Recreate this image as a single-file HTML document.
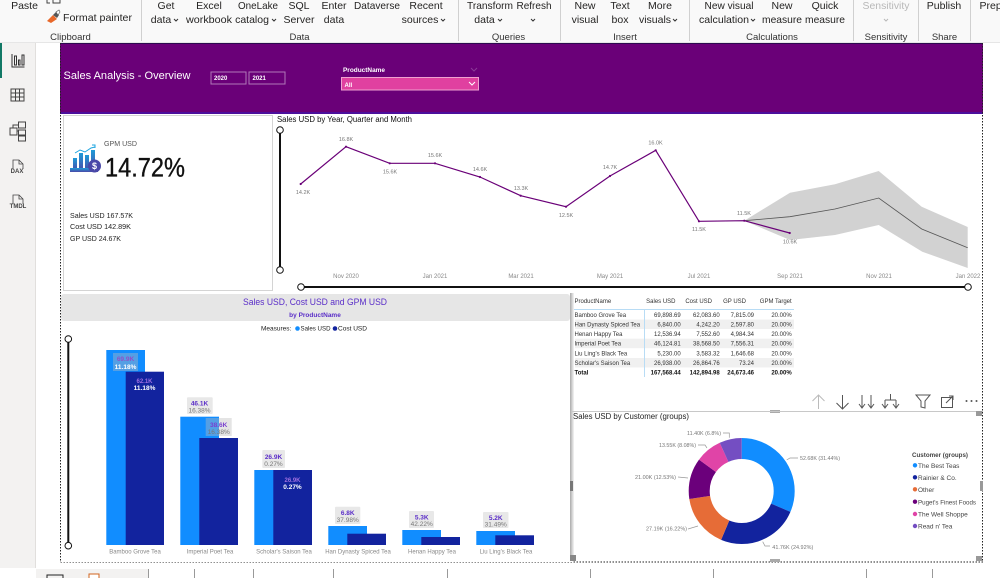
<!DOCTYPE html>
<html><head><meta charset="utf-8"><title>Sales Analysis</title>
<style>
html,body{margin:0;padding:0;width:1000px;height:578px;overflow:hidden;background:#fff}
svg{display:block;filter:blur(.3px)}
text{font-family:"Liberation Sans",sans-serif}
.r{font-size:10.5px;fill:#252423;text-anchor:middle}
.g{font-size:9.5px;fill:#333;text-anchor:middle}
.ch{fill:none;stroke:#333;stroke-width:1}
.x{font-size:6px;fill:#888;text-anchor:middle}
.d{font-size:5.5px;fill:#777;text-anchor:middle}
.t{font-size:6px;fill:#333}
.e{text-anchor:end}
.b{font-weight:bold;fill:#111}
.p{font-size:6.5px;font-weight:bold;fill:#5a2dc8;text-anchor:middle}
.q{font-size:6.5px;fill:#777;text-anchor:middle}
.w{font-size:6.5px;font-weight:bold;fill:#fff;text-anchor:middle}
.l{font-size:6px;fill:#a070e0;font-weight:bold;text-anchor:middle}
.bx{font-size:6px;fill:#888;text-anchor:middle}
.dl{font-size:5.8px;fill:#777}
.lg{font-size:6.5px;fill:#444}
.ic{fill:none;stroke:#444;stroke-width:1}
.li{fill:none;stroke:#999;stroke-width:.7}
</style></head><body>
<svg width="1000" height="578" viewBox="0 0 1000 578" xmlns="http://www.w3.org/2000/svg">
<rect width="1000" height="578" fill="#fff"/>

<!-- ribbon -->
<rect width="1000" height="42" fill="#f9f9f9"/>
<rect y="42" width="1000" height="1" fill="#e6e6e6"/>
<g stroke="#d0d0d0"><path d="M141.500 0V41M458.500 0V41M560.500 0V41M689.500 0V41M853.500 0V41M918.500 0V41M970.500 0V41"/></g>
<text class="r" x="24.500" y="9">Paste</text>
<path d="M47 0v3h3M53 0v3h7V0" fill="none" stroke="#444"/>
<path d="M47 21l6-6 4 4-6 4z" fill="#e8682a"/><path d="M53 15l3-3 3 3-2 3z" fill="#555"/><path d="M56 12l3-2 1 2-2 3z" fill="#fff" stroke="#555" stroke-width=".6"/>
<text class="r" x="97.500" y="21" textLength="69" lengthAdjust="spacingAndGlyphs">Format painter</text>
<text class="r" x="166" y="9">Get</text><text class="r" x="161" y="23">data</text>
<text class="r" x="209" y="9">Excel</text><text class="r" x="209" y="23" textLength="46" lengthAdjust="spacingAndGlyphs">workbook</text>
<text class="r" x="258" y="9" textLength="40" lengthAdjust="spacingAndGlyphs">OneLake</text><text class="r" x="252" y="23">catalog</text>
<text class="r" x="299" y="9">SQL</text><text class="r" x="299" y="23">Server</text>
<text class="r" x="334" y="9">Enter</text><text class="r" x="334" y="23">data</text>
<text class="r" x="377" y="9" textLength="46" lengthAdjust="spacingAndGlyphs">Dataverse</text>
<text class="r" x="426" y="9">Recent</text><text class="r" x="420" y="23">sources</text>
<text class="r" x="490" y="9" textLength="46" lengthAdjust="spacingAndGlyphs">Transform</text><text class="r" x="484.500" y="23">data</text>
<text class="r" x="534" y="9" textLength="35" lengthAdjust="spacingAndGlyphs">Refresh</text>
<text class="r" x="585" y="9">New</text><text class="r" x="585" y="23">visual</text>
<text class="r" x="620" y="9">Text</text><text class="r" x="620" y="23">box</text>
<text class="r" x="660" y="9">More</text><text class="r" x="655" y="23">visuals</text>
<text class="r" x="729" y="9" textLength="49" lengthAdjust="spacingAndGlyphs">New visual</text><text class="r" x="724" y="23" textLength="50" lengthAdjust="spacingAndGlyphs">calculation</text>
<text class="r" x="782" y="9">New</text><text class="r" x="782" y="23" textLength="40" lengthAdjust="spacingAndGlyphs">measure</text>
<text class="r" x="825" y="9">Quick</text><text class="r" x="825" y="23" textLength="40" lengthAdjust="spacingAndGlyphs">measure</text>
<text class="r" x="886" y="9" style="fill:#b8b8b8" textLength="47" lengthAdjust="spacingAndGlyphs">Sensitivity</text>
<text class="r" x="944" y="9">Publish</text>
<text class="r" x="979.500" y="9" style="text-anchor:start">Prep</text>
<g class="ch">
<path d="M174 19l2 2 2-2M272 19l2 2 2-2M441 19l2 2 2-2M498 19l2 2 2-2M531 19l2 2 2-2M673 19l2 2 2-2M751 19l2 2 2-2"/>
<path d="M884 19l2 2 2-2" stroke="#b8b8b8"/>
</g>
<text class="g" x="70.500" y="40">Clipboard</text>
<text class="g" x="299.500" y="40">Data</text>
<text class="g" x="508.500" y="40">Queries</text>
<text class="g" x="625" y="40">Insert</text>
<text class="g" x="772" y="40">Calculations</text>
<text class="g" x="886" y="40">Sensitivity</text>
<text class="g" x="944.500" y="40">Share</text>

<!-- left rail -->
<rect x="0" y="43" width="35" height="525" fill="#f3f2f1"/>
<rect x="35" y="43" width="1" height="525" fill="#e1dfdd"/>
<rect x="0" y="43" width="2" height="35" fill="#117865"/>
<g class="ic">
<path d="M12 54v13h12.500M14.500 56v9h2v-9zM18.500 60v5h1.500v-5zM22 55v10h2v-10z" stroke="#333"/>
<rect x="11" y="89" width="13" height="12"/><path d="M11 93h13M11 97h13M15.500 89v12M19.500 89v12"/>
<rect x="10" y="128" width="7" height="7"/><rect x="18.500" y="122" width="7" height="6"/><rect x="18.500" y="130" width="7" height="5"/><rect x="18.500" y="136" width="7" height="5"/><path d="M17 131h1.500M13 128v-3h5.500"/>
<path d="M13 169v-9h6l4 4v5M19 160v4h4" stroke-width=".8"/>
<path d="M13 204v-9h6l4 4v5M19 195v4h4" stroke-width=".8"/>
</g>
<text x="17" y="173" font-size="6" text-anchor="middle" fill="#444" font-weight="bold">DAX</text>
<text x="18" y="208" font-size="6" text-anchor="middle" fill="#444" font-weight="bold">TMDL</text>

<!-- banner -->
<rect x="60" y="43" width="923" height="70" fill="#6a0078"/>
<rect x="60" y="43" width="923" height="1" fill="#2d0a50"/>
<rect x="60" y="112" width="923" height="2" fill="#4b0f9c"/>
<text x="63.500" y="79" font-size="11" fill="#fff" textLength="127" lengthAdjust="spacingAndGlyphs">Sales Analysis - Overview</text>
<rect x="211" y="72" width="35" height="12" fill="none" stroke="#b078b8"/>
<rect x="249" y="72" width="36" height="12" fill="none" stroke="#b078b8"/>
<text x="214" y="80" font-size="6" font-weight="bold" fill="#fff">2020</text>
<text x="252.500" y="80" font-size="6" font-weight="bold" fill="#fff">2021</text>
<text x="343" y="72" font-size="6.500" font-weight="bold" fill="#fff" textLength="42" lengthAdjust="spacingAndGlyphs">ProductName</text>
<path d="M471 68l3 3 3-3" fill="none" stroke="#8a3a96"/>
<rect x="341.500" y="77.500" width="137" height="12.500" fill="#e040a0" stroke="#f0a0d0"/>
<text x="344.500" y="87" font-size="6" font-weight="bold" fill="#fff">All</text>
<path d="M469 82l3 3 3-3" fill="none" stroke="#fff"/>

<!-- dotted selection -->
<path d="M60.500 43V562H983M982.500 43V562" fill="none" stroke="#222" stroke-dasharray="1.500 1.500"/>

<!-- KPI -->
<rect x="63.500" y="115.500" width="209" height="175" fill="#fff" stroke="#d4d4d4"/>
<defs><linearGradient id="ig" x1="0" y1="0" x2="0" y2="1"><stop offset="0" stop-color="#1e9bd8"/><stop offset="1" stop-color="#4a4aa8"/></linearGradient></defs>
<g fill="url(#ig)">
<rect x="73" y="158" width="4" height="13"/><rect x="79" y="153" width="4" height="18"/><rect x="85" y="155" width="4" height="16"/><rect x="91" y="150" width="4" height="21"/>
<rect x="70" y="168" width="28" height="4"/>
</g>
<circle cx="94.500" cy="166" r="6.500" fill="#4a48a8"/>
<text x="94.500" y="169" font-size="9" font-weight="bold" fill="#fff" text-anchor="middle">$</text>
<path d="M75 153l5-3 5 2 6-4 4-1M92 145h3v3" fill="none" stroke="#1ea5e0"/>
<text x="104" y="146" font-size="7.500" fill="#555" textLength="33" lengthAdjust="spacingAndGlyphs">GPM USD</text>
<text x="105" y="176.500" font-size="27" fill="#111" stroke="#111" stroke-width=".35" textLength="80" lengthAdjust="spacingAndGlyphs">14.72%</text>
<text x="70" y="218" font-size="7.500" fill="#222" textLength="63" lengthAdjust="spacingAndGlyphs">Sales USD 167.57K</text>
<text x="70" y="229" font-size="7.500" fill="#222" textLength="61" lengthAdjust="spacingAndGlyphs">Cost USD 142.89K</text>
<text x="70" y="241" font-size="7.500" fill="#222" textLength="51" lengthAdjust="spacingAndGlyphs">GP USD 24.67K</text>

<!-- line chart -->
<text x="277" y="122" font-size="8" fill="#111" textLength="135" lengthAdjust="spacingAndGlyphs">Sales USD by Year, Quarter and Month</text>
<path d="M280 130V270M301 287H968" stroke="#111" stroke-width="2"/>
<g fill="#fff" stroke="#111"><circle cx="280" cy="130" r="3.300"/><circle cx="280" cy="270" r="3.300"/><circle cx="301" cy="287" r="3.300"/><circle cx="968" cy="287" r="3.300"/></g>
<path d="M744.300 220.700L790 192.700 835 184.300 878.700 171 921.700 206.700 967.700 227 967.700 268 922.300 251.700 878.700 225 835 235 790 240 744.300 220.700Z" fill="#d2d2d2"/>
<path d="M744.300 220.700L790 216.700 835 209 878.700 198 921.700 229 967.700 247.700" fill="none" stroke="#555" stroke-width=".8"/>
<path d="M300.700 184L346 146.700 389.700 163.300 435 163.300 480 177 520.700 195.700 566 206.700 610 176 655.700 150.300 699 221.300 744.300 220.700 789.700 233" fill="none" stroke="#6a0078" stroke-width="1.200"/>
<g fill="#6a0078"><circle cx="300.700" cy="184" r="1.100"/><circle cx="346" cy="146.700" r="1.100"/><circle cx="389.700" cy="163.300" r="1.100"/><circle cx="435" cy="163.300" r="1.100"/><circle cx="480" cy="177" r="1.100"/><circle cx="520.700" cy="195.700" r="1.100"/><circle cx="566" cy="206.700" r="1.100"/><circle cx="610" cy="176" r="1.100"/><circle cx="655.700" cy="150.300" r="1.100"/><circle cx="699" cy="221.300" r="1.100"/><circle cx="744.300" cy="220.700" r="1.100"/><circle cx="789.700" cy="233" r="1.100"/></g>
<text class="d" x="303" y="194">14.2K</text><text class="d" x="346" y="141">16.8K</text><text class="d" x="390" y="173.500">15.6K</text><text class="d" x="435" y="157">15.6K</text><text class="d" x="480" y="171">14.6K</text><text class="d" x="521" y="190">13.3K</text><text class="d" x="566" y="217">12.5K</text><text class="d" x="610" y="169">14.7K</text><text class="d" x="655.500" y="144.500">16.0K</text><text class="d" x="699" y="231">11.5K</text><text class="d" x="744" y="215">11.5K</text><text class="d" x="790" y="243.500">10.6K</text>
<text class="x" x="346" y="278">Nov 2020</text><text class="x" x="435" y="278">Jan 2021</text><text class="x" x="521" y="278">Mar 2021</text><text class="x" x="610" y="278">May 2021</text><text class="x" x="699" y="278">Jul 2021</text><text class="x" x="790" y="278">Sep 2021</text><text class="x" x="879" y="278">Nov 2021</text><text class="x" x="968" y="278">Jan 2022</text>

<!-- bar chart -->
<rect x="61" y="293" width="511" height="269" fill="#fff"/>
<rect x="61" y="294" width="509" height="27" rx="3" fill="#e6e6e6"/>
<text x="315" y="305" font-size="9" fill="#5a2dc8" text-anchor="middle" textLength="144" lengthAdjust="spacingAndGlyphs">Sales USD, Cost USD and GPM USD</text>
<text x="315" y="317" font-size="6.500" font-weight="bold" fill="#5a2dc8" text-anchor="middle">by ProductName</text>
<text x="261" y="330.500" font-size="6.500" fill="#222">Measures:</text>
<circle cx="297.500" cy="328.500" r="2.300" fill="#118dff"/><text x="300.500" y="330.500" font-size="6.500" fill="#222" textLength="30" lengthAdjust="spacingAndGlyphs">Sales USD</text>
<circle cx="335" cy="328.500" r="2.300" fill="#12239e"/><text x="338" y="330.500" font-size="6.500" fill="#222" textLength="29" lengthAdjust="spacingAndGlyphs">Cost USD</text>
<path d="M68.300 339V545.700" stroke="#111" stroke-width="2"/>
<g fill="#fff" stroke="#111"><circle cx="68.300" cy="339" r="3.300"/><circle cx="68.300" cy="545.700" r="3.300"/></g>
<g fill="#118dff">
<rect x="106.300" y="350" width="38.700" height="195"/><rect x="180.300" y="416.700" width="38.700" height="128.300"/><rect x="254.300" y="470" width="38.700" height="75"/><rect x="328.300" y="526" width="38.700" height="19"/><rect x="402.300" y="530" width="38.700" height="15"/><rect x="476.300" y="531" width="38.700" height="14"/>
</g>
<g fill="#12239e">
<rect x="125.700" y="371.700" width="38.300" height="173.300"/><rect x="199.300" y="438" width="38.700" height="107"/><rect x="273.300" y="470" width="38.700" height="75"/><rect x="347.300" y="533.700" width="38.700" height="11.300"/><rect x="421.300" y="537" width="38.700" height="8"/><rect x="495.300" y="535.300" width="38.700" height="9.700"/>
</g>
<g fill="#bbb" fill-opacity=".4">
<rect x="113" y="353" width="25" height="18"/><rect x="205.700" y="418" width="26" height="18"/>
</g>
<g fill="#e8e8e8">
<rect x="187" y="397.300" width="25.700" height="16.700" rx="1"/><rect x="262.300" y="450" width="22.700" height="18" rx="1"/><rect x="335" y="506.700" width="25.300" height="17.300" rx="1"/><rect x="409" y="511" width="25" height="17" rx="1"/><rect x="483" y="512" width="25.500" height="16" rx="1"/>
</g>
<text class="p" x="125.500" y="361" style="fill:#9050c8">69.9K</text><text class="w" x="125.500" y="369">11.18%</text>
<text class="l" x="144.500" y="383">62.1K</text><text class="w" x="144.500" y="390">11.18%</text>
<text class="p" x="199.500" y="405.500">46.1K</text><text class="q" x="199.500" y="412.500">16.38%</text>
<text class="p" x="218.700" y="427" style="fill:#7a40d0">38.6K</text><text class="q" x="218.700" y="434">16.38%</text>
<text class="p" x="273.500" y="459">26.9K</text><text class="q" x="273.500" y="466">0.27%</text>
<text class="l" x="292.500" y="482">26.9K</text><text class="w" x="292.500" y="489">0.27%</text>
<text class="p" x="347.700" y="515">6.8K</text><text class="q" x="347.700" y="522">37.98%</text>
<text class="p" x="421.700" y="519.500">5.3K</text><text class="q" x="421.700" y="526">42.22%</text>
<text class="p" x="495.700" y="520">5.2K</text><text class="q" x="495.700" y="526.500">31.49%</text>
<text class="bx" x="135" y="553.500">Bamboo Grove Tea</text><text class="bx" x="210" y="553.500">Imperial Poet Tea</text><text class="bx" x="284" y="553.500">Scholar's Saison Tea</text><text class="bx" x="358" y="553.500">Han Dynasty Spiced Tea</text><text class="bx" x="432" y="553.500">Henan Happy Tea</text><text class="bx" x="506" y="553.500">Liu Ling's Black Tea</text>

<!-- panel edge -->
<defs><linearGradient id="sh" x1="0" x2="1" y1="0" y2="0"><stop offset="0" stop-color="#aaa"/><stop offset="1" stop-color="#f6f6f6"/></linearGradient></defs>
<rect x="570" y="293" width="4" height="268" fill="url(#sh)"/>
<rect x="570" y="481" width="3" height="10" fill="#777"/>
<rect x="570" y="555" width="6" height="6" fill="#888"/>
<rect x="770" y="410" width="10" height="3" fill="#aaa"/><rect x="770" y="559" width="10" height="3" fill="#aaa"/>
<rect x="572" y="411" width="411" height="1" fill="#c8c8c8"/>
<rect x="976" y="411" width="6" height="5" fill="#999"/><rect x="980" y="481" width="3" height="10" fill="#999"/><rect x="976" y="556" width="6" height="5" fill="#999"/>

<!-- table -->
<rect x="575" y="319.500" width="219" height="9.500" fill="#f0f0f0"/><rect x="575" y="338.700" width="219" height="9.500" fill="#f0f0f0"/><rect x="575" y="358" width="219" height="9.500" fill="#f0f0f0"/>
<path d="M574 309.500H794M644.500 309V377" stroke="#b8dcf5"/>
<g class="t">
<text x="574.500" y="303">ProductName</text><text class="e" x="675.500" y="303">Sales USD</text><text class="e" x="712" y="303">Cost USD</text><text class="e" x="746" y="303">GP USD</text><text class="e" x="791.700" y="303">GPM Target</text>
<text x="574.500" y="317">Bamboo Grove Tea</text><text class="e" x="680.700" y="317">69,898.69</text><text class="e" x="719.700" y="317">62,083.60</text><text class="e" x="754" y="317">7,815.09</text><text class="e" x="791.700" y="317">20.00%</text>
<text x="574.500" y="326.500">Han Dynasty Spiced Tea</text><text class="e" x="680.700" y="326.500">6,840.00</text><text class="e" x="719.700" y="326.500">4,242.20</text><text class="e" x="754" y="326.500">2,597.80</text><text class="e" x="791.700" y="326.500">20.00%</text>
<text x="574.500" y="336">Henan Happy Tea</text><text class="e" x="680.700" y="336">12,536.94</text><text class="e" x="719.700" y="336">7,552.60</text><text class="e" x="754" y="336">4,984.34</text><text class="e" x="791.700" y="336">20.00%</text>
<text x="574.500" y="345.700">Imperial Poet Tea</text><text class="e" x="680.700" y="345.700">46,124.81</text><text class="e" x="719.700" y="345.700">38,568.50</text><text class="e" x="754" y="345.700">7,556.31</text><text class="e" x="791.700" y="345.700">20.00%</text>
<text x="574.500" y="355.300">Liu Ling's Black Tea</text><text class="e" x="680.700" y="355.300">5,230.00</text><text class="e" x="719.700" y="355.300">3,583.32</text><text class="e" x="754" y="355.300">1,646.68</text><text class="e" x="791.700" y="355.300">20.00%</text>
<text x="574.500" y="365">Scholar's Saison Tea</text><text class="e" x="680.700" y="365">26,938.00</text><text class="e" x="719.700" y="365">26,864.76</text><text class="e" x="754" y="365">73.24</text><text class="e" x="791.700" y="365">20.00%</text>
<g class="b"><text x="574.500" y="374.700" class="b">Total</text><text class="e b" x="680.700" y="374.700">167,568.44</text><text class="e b" x="719.700" y="374.700">142,894.98</text><text class="e b" x="754" y="374.700">24,673.46</text><text class="e b" x="791.700" y="374.700">20.00%</text></g>
</g>

<!-- toolbar icons -->
<g fill="none" stroke="#555" stroke-width="1">
<path d="M818.500 409V395M812.500 401l6-6 6 6" stroke="#bbb"/>
<path d="M842.500 395V409M836.500 403l6 6 6-6"/>
<path d="M862 395V408M871 395V408M859 404l3 4 3-4M868 404l3 4 3-4"/>
<path d="M890.500 394V400M885 400H896M885 400V408M896 400V408M882 404l3 4 3-4M893 404l3 4 3-4"/>
<path d="M916 395H930L925 401V408L921 407V401Z"/>
<rect x="941.500" y="397.500" width="11" height="10"/>
<path d="M946 403L953 396M949 396H953V400" stroke="#555"/>
</g>
<g fill="#555"><circle cx="966.500" cy="401" r="1"/><circle cx="971.500" cy="401" r="1"/><circle cx="976.500" cy="401" r="1"/></g>

<!-- donut -->
<text x="573" y="419" font-size="8" fill="#222" textLength="116" lengthAdjust="spacingAndGlyphs">Sales USD by Customer (groups)</text>
<g transform="rotate(-90 741.700 491)" fill="none" stroke-width="21">
<circle cx="741.700" cy="491" r="42.500" stroke="#118dff" pathLength="100" stroke-dasharray="31.44 68.56"/>
<circle cx="741.700" cy="491" r="42.500" stroke="#12239e" pathLength="100" stroke-dasharray="24.92 75.08" stroke-dashoffset="-31.44"/>
<circle cx="741.700" cy="491" r="42.500" stroke="#e66c37" pathLength="100" stroke-dasharray="16.22 83.78" stroke-dashoffset="-56.36"/>
<circle cx="741.700" cy="491" r="42.500" stroke="#6b007b" pathLength="100" stroke-dasharray="12.53 87.47" stroke-dashoffset="-72.58"/>
<circle cx="741.700" cy="491" r="42.500" stroke="#e044a7" pathLength="100" stroke-dasharray="8.08 91.92" stroke-dashoffset="-85.11"/>
<circle cx="741.700" cy="491" r="42.500" stroke="#744ec2" pathLength="100" stroke-dasharray="6.8 93.2" stroke-dashoffset="-93.19"/>
</g>
<path class="li" d="M786.700 460l3.300-2h8M762.700 541.700l2.300 4.300h5M688 529l10-3M678 477l10 1M698 445h7l2 3M723 433h6.300v4.700"/>
<text class="dl" x="800" y="460" textLength="40" lengthAdjust="spacingAndGlyphs">52.68K (31.44%)</text>
<text class="dl" x="772.300" y="549" textLength="41" lengthAdjust="spacingAndGlyphs">41.76K (24.92%)</text>
<text class="dl" x="646" y="530.500" textLength="41" lengthAdjust="spacingAndGlyphs">27.19K (16.22%)</text>
<text class="dl" x="635" y="479" textLength="41" lengthAdjust="spacingAndGlyphs">21.00K (12.53%)</text>
<text class="dl" x="659" y="447" textLength="37" lengthAdjust="spacingAndGlyphs">13.55K (8.08%)</text>
<text class="dl" x="687" y="435" textLength="34" lengthAdjust="spacingAndGlyphs">11.40K (6.8%)</text>
<text x="912" y="457" font-size="6.500" font-weight="bold" fill="#444" textLength="56" lengthAdjust="spacingAndGlyphs">Customer (groups)</text>
<g>
<circle cx="915" cy="465.300" r="2.200" fill="#118dff"/><text class="lg" x="918" y="468">The Best Teas</text>
<circle cx="915" cy="477.300" r="2.200" fill="#12239e"/><text class="lg" x="918" y="480">Rainier &amp; Co.</text>
<circle cx="915" cy="489.300" r="2.200" fill="#e66c37"/><text class="lg" x="918" y="492">Other</text>
<circle cx="915" cy="501.700" r="2.200" fill="#6b007b"/><text class="lg" x="918" y="504.300" textLength="58" lengthAdjust="spacingAndGlyphs">Puget's Finest Foods</text>
<circle cx="915" cy="514" r="2.200" fill="#e044a7"/><text class="lg" x="918" y="516.700">The Well Shoppe</text>
<circle cx="915" cy="526" r="2.200" fill="#744ec2"/><text class="lg" x="918" y="528.700">Read n' Tea</text>
</g>

<!-- bottom -->
<rect x="36" y="569" width="112" height="9" fill="#f3f2f1"/>
<rect x="47" y="575" width="16" height="6" fill="none" stroke="#222"/>
<rect x="89" y="574" width="10" height="6" fill="#fff" stroke="#d0641e"/>
<path d="M148.500 569V578M194.500 569V578M253.500 569V578M333.500 569V578M447.500 569V578M590.500 569V578M713.500 569V578M866.500 569V578M932.500 569V578" stroke="#999"/>
</svg>
</body></html>
